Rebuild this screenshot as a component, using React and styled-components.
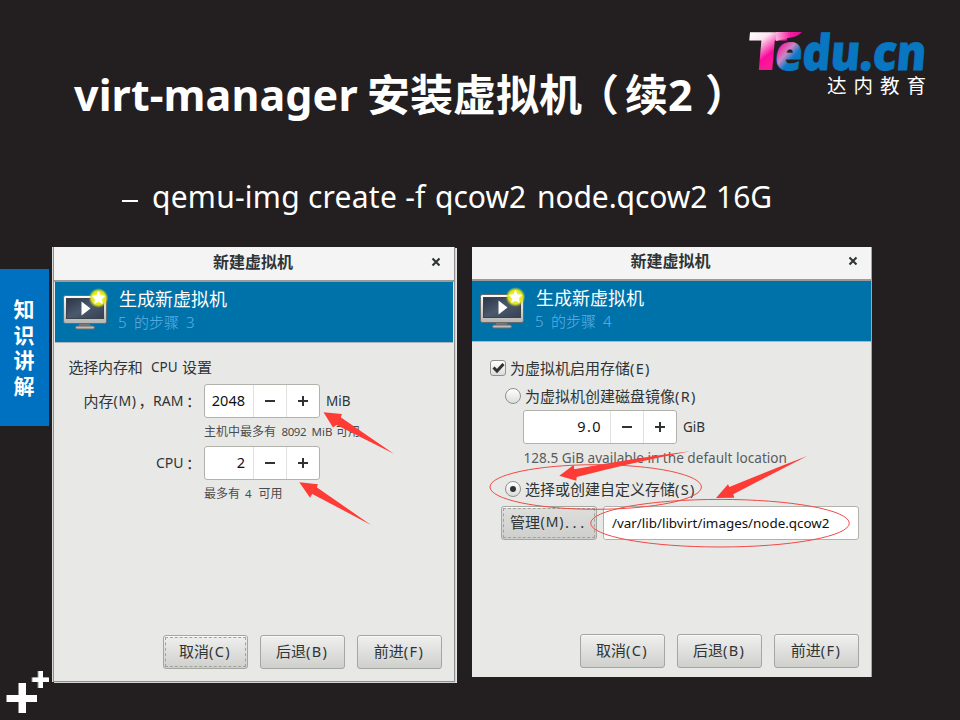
import React from "react";
import styled, { createGlobalStyle, css } from "styled-components";

const Global = createGlobalStyle`
  * { box-sizing: border-box; }
  body { margin: 0; background: #231f20; }
`;

const Slide = styled.main`
  position: relative;
  width: 960px;
  height: 720px;
  overflow: hidden;
  display: flex;
  flex-direction: column;
  background: #231f20;
  color: #fff;
  font-family: "Noto Sans", "Noto Sans CJK SC", sans-serif;
  white-space: pre;
`;

const Header = styled.header`
  display: flex;
  height: 177px;
  justify-content: space-between;
  padding: 24px 24px 0 74px;
`;

const Title = styled.h1`
  display: flex;
  margin: 41px 0 0;
  font-size: 43px;
  line-height: 60px;
  font-weight: 700;
`;

const TitlePart = styled.span`
  width: ${(p) => p.$w}px;
  letter-spacing: ${(p) => p.$ls || 0}px;
`;

const Brand = styled.div`
  width: 190px;
  display: flex;
  flex-direction: column;
`;

const BrandName = styled.span`
  height: 20px;
  margin: -1px 0 0 79px;
  font-size: 19.5px;
  line-height: 20px;
  letter-spacing: 7px;
`;

const Command = styled.p`
  display: flex;
  align-items: center;
  height: 40px;
  margin: 0 0 0 122px;
  font-size: 30px;
  line-height: 40px;
`;

const Dash = styled.span`
  width: 16px;
  height: 2px;
  margin: 8px 14px 0 0;
  background: #fff;
`;

const Body = styled.div`
  display: flex;
  align-items: flex-start;
  margin-top: 30px;
  height: 473px;
`;

const Side = styled.aside`
  width: 52px;
  height: 473px;
  padding-top: 22px;
  display: flex;
  flex-direction: column;
  justify-content: space-between;
`;

const Tab = styled.div`
  width: 49px;
  height: 157px;
  padding: 28px 13px 0 12px;
  background: #0070c0;
  font-size: 21px;
  line-height: 25.6px;
  font-weight: 700;
  text-align: center;
  white-space: normal;
  word-break: break-all;
`;

const Dialog = styled.section`
  display: flex;
  flex-direction: column;
  background: #e8e8e6;
  color: #2e3436;
  font-size: 15px;
  ${(p) =>
    p.$framed
      ? css`
          width: 402px;
          height: 435px;
          border: solid #8f8f8f;
          border-width: 0 1px 1px;
          box-shadow: 1px 1px 0 #d2d4d4, 2px 1px 0 #e6e8e8, -1px 0 0 #d9d9d9;
          margin: 0 17px 0 1px;
        `
      : css`
          width: 400px;
          height: 430px;
          border-right: 1px solid #a5a5a3;
        `}
`;

const TitleBar = styled.div`
  display: grid;
  grid-template-columns: 1fr auto 1fr;
  align-items: center;
  height: ${(p) => p.$h}px;
  padding: 0 13px 4px 11px;
  background: #f4f4f4;
  border-bottom: 2px solid #9b9b97;
  font-size: 16px;
  line-height: 20px;
  font-weight: 700;
  & > svg { grid-column: 3; justify-self: end; }
`;

const Caption = styled.span`
  grid-column: 2;
`;

const Banner = styled.div`
  display: flex;
  height: ${(p) => p.$h}px;
  flex: none;
  margin: ${(p) => p.$m};
  padding: 6px 7px;
  background: #0072aa;
  border-bottom: 1px solid #a9b6bb;
  gap: 11px;
`;

const BannerText = styled.div`
  display: flex;
  flex-direction: column;
  font-size: 18px;
  line-height: 22px;
  color: #fff;
`;

const Step = styled.div`
  display: flex;
  margin-left: -1px;
  font-size: 15px;
  font-weight: 300;
  line-height: 24px;
  color: #5fb0e6;
`;

const Form = styled.div`
  flex: 1;
  display: flex;
  flex-direction: column;
  padding-top: ${(p) => p.$top}px;
`;

const Line = styled.div`
  display: flex;
  align-items: center;
  flex: none;
  height: ${(p) => p.$h}px;
  margin-top: ${(p) => p.$mt || 0}px;
  padding-left: ${(p) => p.$x}px;
  line-height: 20px;
`;

const Run = styled.span`
  flex: none;
  width: ${(p) => (p.$w ? `${p.$w}px` : "auto")};
  font-size: ${(p) => (p.$s ? `${p.$s}px` : "inherit")};
  letter-spacing: ${(p) => p.$ls || 0}px;
`;

const Note = styled(Line)`
  font-size: 12px;
  color: #484c4d;
`;

const Description = styled(Line)`
  font-size: 13.6px;
  color: #5a5c5b;
`;

const Spin = styled.div`
  display: grid;
  grid-template-columns: ${(p) => p.$value}px 33px 33px;
  flex: none;
  height: 34px;
  background: #fff;
  border: 1px solid #b2b2ac;
  border-radius: 3px;
  margin-right: 6px;
`;

const SpinValue = styled.span`
  padding-right: 8px;
  text-align: right;
  font-size: 14.5px;
  line-height: 31px;
  color: #111;
  letter-spacing: ${(p) => p.$ls || 0}px;
`;

const SpinButton = styled.span`
  display: flex;
  align-items: center;
  justify-content: center;
  border-left: 1px solid #e0e0de;
`;

const Button = styled.button`
  display: flex;
  align-items: center;
  justify-content: center;
  flex: none;
  width: ${(p) => p.$w || 85}px;
  height: 34px;
  padding: 0 1px 3px 0;
  border: 1px solid #a4a6a0;
  border-radius: 3px;
  background: linear-gradient(#f0f0ef, #e4e4e2 35%, #cfcfcc);
  box-shadow: inset 0 1px 0 #fafafa;
  color: #2e3436;
  font: 15px/20px "Noto Sans", "Noto Sans CJK SC", sans-serif;
  white-space: pre;
  ${(p) =>
    p.$focus &&
    css`
      outline: 1px dashed #a0a09c;
      outline-offset: -3px;
    `}
  ${(p) => p.$pressed && css`background: linear-gradient(#dededc, #cececc);`}
`;

const Actions = styled.div`
  display: flex;
  gap: 12px;
  justify-content: flex-end;
  margin-top: auto;
  padding: ${(p) => p.$p};
`;

const Entry = styled.div`
  width: 256px;
  height: 34px;
  margin-left: 6px;
  padding-left: 8px;
  background: #fff;
  border: 1px solid #b2b2ac;
  border-radius: 3px;
  color: #111;
  font-size: 13.4px;
  line-height: 33px;
`;

const Check = styled.span`
  display: flex;
  align-items: center;
  justify-content: center;
  flex: none;
  width: 16px;
  height: 16px;
  margin-right: 4px;
  border: 1px solid #8f918d;
  border-radius: ${(p) => (p.$round ? "50%" : "3px")};
  background: linear-gradient(#fff, #dcdcda);
`;

const Dot = styled.span`
  width: 6px;
  height: 6px;
  border-radius: 50%;
  background: #2e3436;
`;

const Marks = styled.svg`
  position: absolute;
  inset: 0;
  pointer-events: none;
`;

const LogoArt = styled.svg`
  flex: none;
  overflow: visible;
`;

const Logo = () => (
  <LogoArt width="190" height="53" viewBox="746 24 190 53">
    <defs>
      <linearGradient id="tee" gradientUnits="userSpaceOnUse" x1="750" y1="30" x2="774" y2="58">
        <stop offset="0" stopColor="#fff" />
        <stop offset=".35" stopColor="#fce4f2" />
        <stop offset=".8" stopColor="#f90a9c" />
        <stop offset="1" stopColor="#fb1a96" />
      </linearGradient>
      <linearGradient id="swoosh" gradientUnits="userSpaceOnUse" x1="772" y1="0" x2="800" y2="0">
        <stop offset="0" stopColor="#fbc6e3" />
        <stop offset=".6" stopColor="#f41ba0" />
        <stop offset="1" stopColor="#d8108c" />
      </linearGradient>
      <linearGradient id="bow" gradientUnits="userSpaceOnUse" x1="777" y1="48" x2="795" y2="62">
        <stop offset="0" stopColor="#f62aa2" />
        <stop offset=".4" stopColor="#c989c6" />
        <stop offset=".75" stopColor="#0d7ac6" />
        <stop offset="1" stopColor="#0876c0" />
      </linearGradient>
    </defs>
    <g fontFamily="Open Sans, sans-serif" fontWeight="800" transform="translate(4.600 0) skewX(-5)">
      <text x="744.500" y="70" fontSize="53" textLength="41" lengthAdjust="spacingAndGlyphs" fill="url(#tee)">T</text>
      <text x="773.500" y="69.700" fontSize="49" textLength="151" lengthAdjust="spacingAndGlyphs" fill="#0876c0" stroke="#0876c0" strokeWidth=".9"><tspan fill="url(#bow)" stroke="url(#bow)">e</tspan>du.cn</text>
    </g>
    <path d="M774 32H800Q796 37 786 38L774 41Z" fill="url(#swoosh)" />
  </LogoArt>
);

const Pluses = () => (
  <svg width="50" height="50" viewBox="0 670 50 50">
    <path d="M19 683h7v12h11v7H26v11h-7v-11H7v-7h12zM38.500 671h4.500v6.500h6v4.500h-6v6h-4.500v-6h-6v-4.500h6z" transform="translate(-1 0)" fill="#8f8d8d" />
    <path d="M19 683h7v12h11v7H26v11h-7v-11H7v-7h12zM38.500 671h4.500v6.500h6v4.500h-6v6h-4.500v-6h-6v-4.500h6z" fill="#fff" />
  </svg>
);

const Close = () => (
  <svg width="10" height="10" viewBox="0 0 10 10">
    <path d="M1.500 1.500l7 7M8.500 1.500l-7 7" stroke="#2e3436" strokeWidth="2.100" />
  </svg>
);

const Monitor = ({ id }) => (
  <svg width="46" height="42" viewBox="0 0 46 42">
    <defs>
      <linearGradient id={`${id}f`} x2="0" y2="1">
        <stop stopColor="#fbfbfb" />
        <stop offset="1" stopColor="#b5b5b3" />
      </linearGradient>
      <linearGradient id={`${id}s`} x2="1" y2="1">
        <stop stopColor="#2b3646" />
        <stop offset=".5" stopColor="#4b596c" />
        <stop offset="1" stopColor="#354152" />
      </linearGradient>
      <radialGradient id={`${id}g`}>
        <stop offset=".35" stopColor="#f4f11a" />
        <stop offset=".7" stopColor="#e2e51c" />
        <stop offset="1" stopColor="#b6cc2c" stopOpacity="0" />
      </radialGradient>
    </defs>
    <rect x="17" y="35" width="11" height="4" fill="#777" />
    <rect x="13.500" y="38" width="19" height="3" rx="1.500" fill="#bbb" stroke="#6b6b69" />
    <rect x="1.500" y="7.500" width="43" height="28" rx="2" fill={`url(#${id}f)`} stroke="#686b6c" />
    <rect x="4.500" y="10.500" width="37" height="20" fill={`url(#${id}s)`} stroke="#3c434d" />
    <path d="M19.500 13.500v14l9-7z" fill="#fff" />
    <circle cx="36.500" cy="10" r="10" fill={`url(#${id}g)`} />
    <path d="M36.500 3.500l1.900 4 4.400.6-3.200 3.100.8 4.400-3.900-2.100-3.900 2.100.8-4.400-3.200-3.100 4.400-.6z" fill="#fff" stroke="#fff" strokeWidth=".6" />
  </svg>
);

const Minus = () => (
  <svg width="10" height="10" viewBox="0 0 10 10"><path d="M0 5h10" stroke="#2e3436" strokeWidth="2" /></svg>
);
const Plus = () => (
  <svg width="10" height="10" viewBox="0 0 10 10"><path d="M0 5h10M5 0v10" stroke="#2e3436" strokeWidth="2" /></svg>
);

const SpinBox = ({ value, width, ls }) => (
  <Spin $value={width}>
    <SpinValue $ls={ls}>{value}</SpinValue>
    <SpinButton><Minus /></SpinButton>
    <SpinButton><Plus /></SpinButton>
  </Spin>
);

const WizardHead = ({ id, step, barHeight, bannerHeight, margin }) => (
  <>
    <TitleBar $h={barHeight}>
      <Caption>新建虚拟机</Caption>
      <Close />
    </TitleBar>
    <Banner $h={bannerHeight} $m={margin}>
      <Monitor id={id} />
      <BannerText>
        生成新虚拟机
        <Step>
          <Run $w={16}>5</Run>
          <Run $w={52}>的步骤</Run>
          <Run $w={9}>{step}</Run>
        </Step>
      </BannerText>
    </Banner>
  </>
);

const Mnemonic = ({ text, letter }) => (
  <>
    <span>{text}</span>
    <Run $s={14.5} $ls={1.3}>({letter})</Run>
  </>
);

const WizardActions = ({ padding, focus }) => (
  <Actions $p={padding}>
    <Button $focus={focus}><Mnemonic text="取消" letter="C" /></Button>
    <Button><Mnemonic text="后退" letter="B" /></Button>
    <Button><Mnemonic text="前进" letter="F" /></Button>
  </Actions>
);

export default function App() {
  return (
    <Slide>
      <Global />
      <Header>
        <Title>
          <TitlePart $w={293} $ls={0.1}>virt-manager</TitlePart>
          <TitlePart $w={209}>安装虚拟机</TitlePart>
          <TitlePart $w={49}>（</TitlePart>
          <TitlePart $w={80}>续2</TitlePart>
          <TitlePart $w={43}>）</TitlePart>
        </Title>
        <Brand>
          <Logo />
          <BrandName>达内教育</BrandName>
        </Brand>
      </Header>
      <Command>
        <Dash />
        <Run $w={283} $ls={0.25}>qemu-img create -f</Run>
        <Run $w={102} $ls={0}>qcow2</Run>
        <Run $w={179} $ls={-0.1}>node.qcow2</Run>
        <Run>16G</Run>
      </Command>
      <Body>
        <Side>
          <Tab>知识讲解</Tab>
          <Pluses />
        </Side>

        <Dialog $framed>
          <WizardHead id="ram" step="3" barHeight={35} bannerHeight={61} margin="0 1px 0 1px" />
          <Form $top={14}>
            <Line $h={20} $x={14.5}>
              <Run $w={82.5} $ls={-0.2}>选择内存和</Run>
              <Run $w={31} $s={13.5}>CPU</Run>
              <span>设置</span>
            </Line>
            <Line $h={34} $mt={7} $x={29.5}>
              <Run $w={30}>内存</Run>
              <Run $w={25} $s={14} $ls={0.7}>(M)</Run>
              <Run $w={14.5}>，</Run>
              <Run $w={33} $s={14}>RAM</Run>
              <Run $w={18}>：</Run>
              <SpinBox value="2048" width={48} />
              <Run $s={13.5}>MiB</Run>
            </Line>
            <Note $h={20} $mt={4} $x={150}>
              <Run $w={77.5}>主机中最多有</Run>
              <Run $w={30} $s={11.5} $ls={-0.4}>8092</Run>
              <Run $w={24.5} $s={11.5}>MiB</Run>
              <span>可用</span>
            </Note>
            <Line $h={34} $mt={4} $x={102}>
              <Run $w={30} $s={14}>CPU</Run>
              <Run $w={18}>：</Run>
              <SpinBox value="2" width={48} />
            </Line>
            <Note $h={20} $mt={4} $x={150}>
              <Run $w={41}>最多有</Run>
              <Run $w={13.5} $s={11.5}>4</Run>
              <span>可用</span>
            </Note>
          </Form>
          <WizardActions padding="0 12px 12px" focus />
        </Dialog>

        <Dialog>
          <WizardHead id="disk" step="4" barHeight={34} bannerHeight={61} margin="0" />
          <Form $top={16}>
            <Line $h={20} $x={18}>
              <Check>
                <svg width="14" height="14" viewBox="0 0 14 14">
                  <path d="M2.500 6.500L6 10l6.500-7" fill="none" stroke="#2e3436" strokeWidth="3" />
                </svg>
              </Check>
              <Mnemonic text="为虚拟机启用存储" letter="E" />
            </Line>
            <Line $h={20} $mt={8} $x={33}>
              <Check $round />
              <Mnemonic text="为虚拟机创建磁盘镜像" letter="R" />
            </Line>
            <Line $h={34} $mt={4} $x={51}>
              <SpinBox value="9.0" width={86} ls={1.4} />
              <Run $s={13.5}>GiB</Run>
            </Line>
            <Description $h={20} $mt={4} $x={51.5}>128.5 GiB available in the default location</Description>
            <Line $h={20} $mt={11} $x={33}>
              <Check $round><Dot /></Check>
              <Mnemonic text="选择或创建自定义存储" letter="S" />
            </Line>
            <Line $h={34} $mt={7} $x={29}>
              <Button $w={96} $focus $pressed>
                <Run $w={30}>管理</Run>
                <Run $w={25} $s={14} $ls={0.9}>(M)</Run>
                <Run $w={22} $ls={3.6}>...</Run>
              </Button>
              <Entry>/var/lib/libvirt/images/node.qcow2</Entry>
            </Line>
          </Form>
          <WizardActions padding="0 12px 9px" />
        </Dialog>
      </Body>

      <Marks width="960" height="720" viewBox="0 0 960 720">
        <g fill="#ff3b36">
          <path d="M323.500 412.300L342 414L340.700 417.300L393.800 453.800L336.500 425L333 427.500Z" />
          <path d="M299.300 482.300L318 484.300L316.700 487.300L371 524.900L312.300 494L310 497.700Z" />
          <path d="M559.300 475.700L573.700 465L574.300 469.300Q635 458 690 451.300Q635 462 576.700 477L576.300 480.700Z" />
          <path d="M716 498L728 484.300L729.300 487Q768 471 807.300 456Q772 474 733.300 494.300L734.300 497.700Z" />
        </g>
        <g fill="none" stroke="#f04a46" strokeWidth="1">
          <ellipse cx="595.700" cy="487" rx="105.700" ry="22.300" />
          <ellipse cx="720" cy="523.200" rx="129.300" ry="23.800" />
        </g>
      </Marks>
    </Slide>
  );
}
